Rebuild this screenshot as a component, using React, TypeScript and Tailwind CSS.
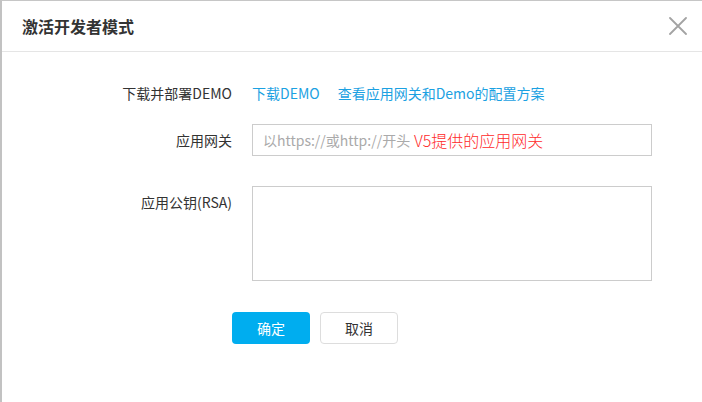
import React from "react";

export default function App() {
  return (
    <div
      className="w-[702px] h-[402px] bg-white border-t border-t-[#c6c6c6] border-l-2 border-l-[#c2c2c2] overflow-hidden flex flex-col text-[#333]"
      style={{ fontFamily: '"Noto Sans CJK SC", "Noto Sans", sans-serif' }}
    >
      <div className="h-[51px] shrink-0 flex items-center justify-between pl-[20px] pr-[15px] border-b border-b-[#e5e5e5]">
        <div className="text-[16px] font-bold text-[#333] leading-none">激活开发者模式</div>
        <svg width="18" height="18" viewBox="0 0 18 18" className="mb-[1px]">
          <path d="M1 1 L17 17 M17 1 L1 17" stroke="#a3a3a3" strokeWidth="1.8" strokeLinecap="round" />
        </svg>
      </div>
      <div className="flex flex-col pt-[25px] text-[14px]">
        <div className="flex h-[32px] items-center">
          <div className="w-[230px] text-right pr-0">下载并部署DEMO</div>
          <div className="ml-[20px] flex gap-[18px] text-[#1ba1e2]">
            <span>下载DEMO</span>
            <span>查看应用网关和Demo的配置方案</span>
          </div>
        </div>
        <div className="flex h-[32px] items-center mt-[15px]">
          <div className="w-[230px] text-right">应用网关</div>
          <div className="ml-[20px] relative w-[400px] h-[32px]">
            <input
              className="w-full h-full border border-[#cccccc] px-[10px] outline-none text-[14px] placeholder:text-[#aaaaaa]"
              placeholder="以https://或http://开头"
            />
            <span className="absolute left-[162px] top-0 h-[32px] flex items-center text-[16px] font-light text-[#ff2a2a] pointer-events-none">
              V5提供的应用网关
            </span>
          </div>
        </div>
        <div className="flex mt-[30px]">
          <div className="w-[230px] text-right leading-[32px]">应用公钥(RSA)</div>
          <textarea className="ml-[20px] w-[400px] h-[95px] border border-[#cccccc] resize-none outline-none" />
        </div>
        <div className="flex mt-[31px] pl-[230px] gap-[10px]">
          <button className="w-[78px] h-[32px] rounded-[4px] bg-[#00adef] text-white text-[14px]">确定</button>
          <button className="w-[78px] h-[32px] rounded-[4px] bg-white border border-[#dddddd] text-[#333] text-[14px]">取消</button>
        </div>
      </div>
    </div>
  );
}
